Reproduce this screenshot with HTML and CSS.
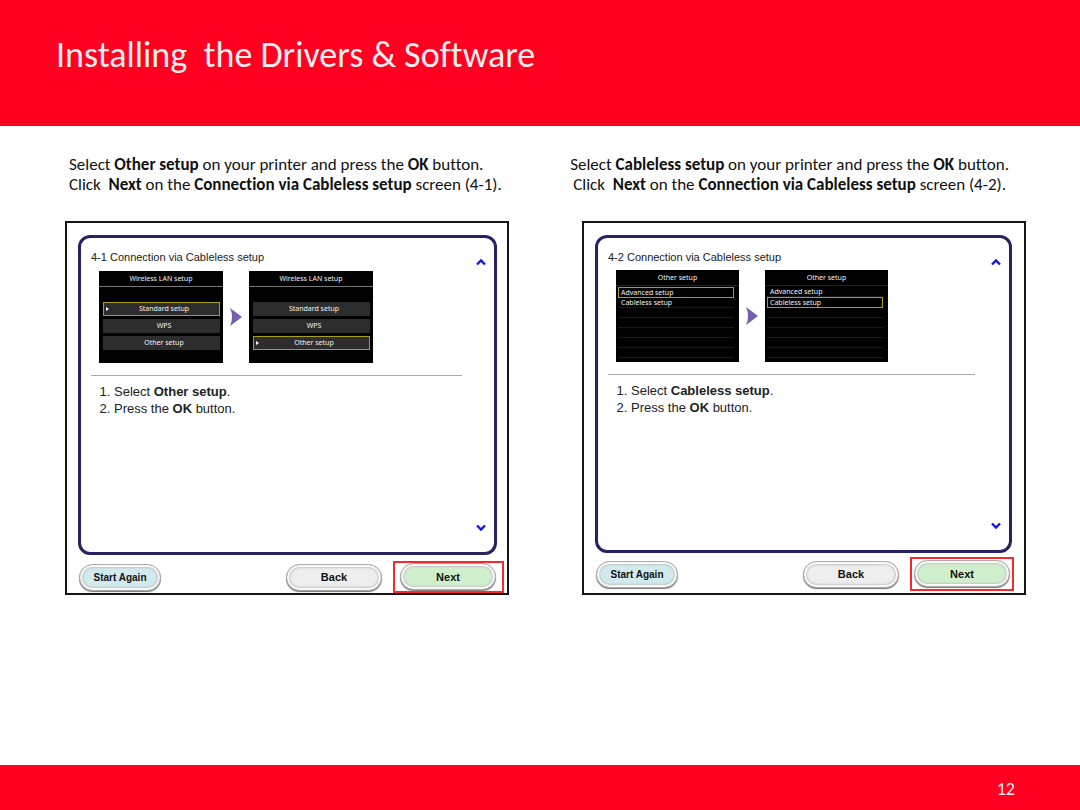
FILE: index.html
```html
<!DOCTYPE html>
<html lang="en">
<head>
<meta charset="utf-8">
<title>Installing the Drivers &amp; Software</title>
<link rel="stylesheet" href="styles.css">
</head>
<body>
<header class="slide-header">
  <h1>Installing&nbsp; the Drivers &amp; Software</h1>
</header>
<main class="slide-body">
  <div class="captions">
    <p class="caption">Select <b>Other setup</b> on your printer and press the <b>OK</b> button.<br>Click&nbsp; <b>Next</b> on the <b>Connection via Cableless setup</b> screen (4-1).</p>
    <p class="caption caption-center">Select <b>Cableless setup</b> on your printer and press the <b>OK</b> button.<br>Click&nbsp; <b>Next</b> on the <b>Connection via Cableless setup</b> screen (4-2).</p>
  </div>
  <div class="windows">
    <section class="window">
      <div class="panel">
        <div class="content">
          <h2>4-1 Connection via Cableless setup</h2>
          <div class="screens">
            <div class="screen">
              <div class="screen-title">Wireless LAN setup</div>
              <ul class="tiles">
                <li class="tile selected">Standard setup</li>
                <li class="tile">WPS</li>
                <li class="tile">Other setup</li>
              </ul>
            </div>
            <svg class="arrow" viewBox="0 0 12 18" aria-hidden="true"><path d="M0 0 12 9 0 18Q4 9 0 0Z"/></svg>
            <div class="screen">
              <div class="screen-title">Wireless LAN setup</div>
              <ul class="tiles">
                <li class="tile">Standard setup</li>
                <li class="tile">WPS</li>
                <li class="tile selected">Other setup</li>
              </ul>
            </div>
          </div>
          <ol class="steps">
            <li>Select <b>Other setup</b>.</li>
            <li>Press the <b>OK</b> button.</li>
          </ol>
        </div>
        <div class="scroller">
          <button class="chevron" type="button" aria-label="Scroll up"><svg viewBox="0 0 10 8"><path d="M1 6.5 5 2.5 9 6.5"/></svg></button>
          <button class="chevron" type="button" aria-label="Scroll down"><svg viewBox="0 0 10 8"><path d="M1 1.5 5 5.5 9 1.5"/></svg></button>
        </div>
      </div>
      <div class="actions">
        <button class="pill pill-start" type="button">Start Again</button>
        <button class="pill pill-back" type="button">Back</button>
        <div class="highlight"><button class="pill pill-next" type="button">Next</button></div>
      </div>
    </section>
    <section class="window window-second">
      <div class="panel">
        <div class="content">
          <h2>4-2 Connection via Cableless setup</h2>
          <div class="screens">
            <div class="screen">
              <div class="screen-title dim">Other setup</div>
              <ul class="rows">
                <li class="row current">Advanced setup</li>
                <li class="row">Cableless setup</li>
                <li class="row"></li><li class="row"></li><li class="row"></li><li class="row"></li><li class="row"></li>
              </ul>
            </div>
            <svg class="arrow" viewBox="0 0 12 18" aria-hidden="true"><path d="M0 0 12 9 0 18Q4 9 0 0Z"/></svg>
            <div class="screen">
              <div class="screen-title dim">Other setup</div>
              <ul class="rows">
                <li class="row">Advanced setup</li>
                <li class="row current">Cableless setup</li>
                <li class="row"></li><li class="row"></li><li class="row"></li><li class="row"></li><li class="row"></li>
              </ul>
            </div>
          </div>
          <ol class="steps">
            <li>Select <b>Cableless setup</b>.</li>
            <li>Press the <b>OK</b> button.</li>
          </ol>
        </div>
        <div class="scroller">
          <button class="chevron" type="button" aria-label="Scroll up"><svg viewBox="0 0 10 8"><path d="M1 6.5 5 2.5 9 6.5"/></svg></button>
          <button class="chevron" type="button" aria-label="Scroll down"><svg viewBox="0 0 10 8"><path d="M1 1.5 5 5.5 9 1.5"/></svg></button>
        </div>
      </div>
      <div class="actions">
        <button class="pill pill-start" type="button">Start Again</button>
        <button class="pill pill-back" type="button">Back</button>
        <div class="highlight"><button class="pill pill-next" type="button">Next</button></div>
      </div>
    </section>
  </div>
</main>
<footer class="slide-footer">12</footer>
</body>
</html>
```
FILE: styles.css
```css
* { box-sizing: border-box; }
body {
  margin: 0;
  min-height: 100vh;
  display: flex;
  flex-direction: column;
  background: #fff;
  color: #111;
  font-family: Carlito, Calibri, Lato, sans-serif;
  font-variant-ligatures: none;
}
h1, h2, p, ul, ol { margin: 0; padding: 0; }
ul { list-style: none; }
button { margin: 0; font: inherit; cursor: pointer; }

.slide-header {
  padding: 33px 56px 49px;
  background: #ff0020;
  color: #f4eeee;
}
h1 { font-size: 36px; line-height: 44px; font-weight: 400; }
.slide-body { flex: 1; padding-top: 29px; }
.captions {
  display: grid;
  grid-template-columns: 1fr 1fr;
  gap: 68px;
  padding: 0 71px 0 69px;
}
.caption { font-size: 17px; line-height: 20px; white-space: nowrap; }
.caption-center { text-align: center; }

.windows {
  display: grid;
  grid-template-columns: 1fr 1fr;
  gap: 73px;
  padding: 26px 54px 26px 65px;
  font-family: "Liberation Sans", Arial, sans-serif;
}
.window {
  display: flex;
  flex-direction: column;
  padding: 12px 10px 0 11px;
  border: 2px solid #151515;
}
.window-second { padding-right: 12px; }
.panel {
  display: flex;
  justify-content: space-between;
  min-height: 320px;
  padding: 12px 8px 20px 10px;
  border: 3px solid #252360;
  border-radius: 12px;
}
.window-second .panel { min-height: 318px; }
.content { flex: 1; }
h2 { font-size: 11px; line-height: 14px; font-weight: 400; color: #222; }
.screens {
  display: flex;
  align-items: center;
  gap: 7px;
  padding: 7px 0 12px 8px;
  border-bottom: 1px solid #aaa;
}
.window-second .screens { padding-top: 6px; }
.screen {
  width: 124px;
  height: 92px;
  background: #000;
  color: #f2f2f2;
  font: 7px/14px "Noto Sans", sans-serif;
}
.window-second .screen { width: 123px; }
.screen-title { height: 16px; padding-top: 1px; border-bottom: 1px solid #777; text-align: center; }
.screen-title.dim { border-color: #222; }
.tiles { display: grid; gap: 3px; padding: 15px 3px 0 4px; }
.tile { height: 14px; padding-left: 5px; background: #2d2d2d; text-align: center; line-height: 13px; }
.selected {
  border: 1px solid #a79d18;
  line-height: 11px;
  position: relative;
}
.selected::before {
  content: "";
  position: absolute;
  top: 4px;
  left: 2px;
  border: 2px solid transparent;
  border-left: 3px solid #fff;
  border-right: 0;
}
.rows { padding: 1px 5px 0 2px; line-height: 10px; }
.row { height: 10px; padding-left: 3px; border-bottom: 1px solid #191919; }
.row.current { height: 11px; padding-left: 2px; border: 1px solid #a79d18; }
.arrow { width: 12px; height: 18px; fill: #7560ad; }
.steps {
  padding: 7px 0 0 23px;
  font-size: 13px;
  line-height: 17px;
  color: #222;
}
.scroller { display: flex; flex-direction: column; justify-content: space-between; padding: 8px 0 0 14px; }
.window-second .scroller { padding-left: 16px; }
.chevron { display: flex; padding: 0; border: 0; background: none; }
.chevron svg { width: 10px; height: 8px; fill: none; stroke: #1515e8; stroke-width: 2.4; }

.actions { display: flex; align-items: center; margin-right: -7px; padding: 6px 0 0 1px; }
.window-second .actions { margin-right: -2px; padding: 4px 0 2px 1px; }
.pill {
  width: 96px;
  height: 27px;
  padding: 0;
  border: 1px solid #aaa;
  border-radius: 14px;
  box-shadow: inset 0 0 0 2px #f8f8f8, inset 0 0 2px 3px #c5c5c5, 0 1px 1px #777;
  color: #111;
  font-size: 11px;
  font-weight: 700;
}
.pill-start { width: 82px; background: #d0eaee; font-size: 10px; }
.pill-back { margin-left: auto; margin-right: 11px; background: #eee; }
.pill-next { background: #d0efcd; }
.highlight { display: flex; padding: 0 6px 1px 5px; border: 2px solid #f42a2c; }
.window-second .highlight { padding: 1px 2px 2px; }

.slide-footer {
  padding: 14px 65px 11px;
  background: #ff0020;
  color: #f4eeee;
  font-size: 18px;
  line-height: 20px;
  text-align: right;
}
```
